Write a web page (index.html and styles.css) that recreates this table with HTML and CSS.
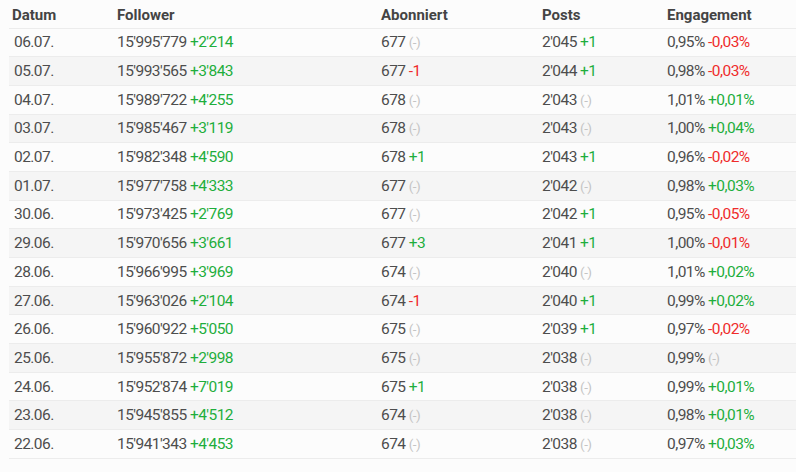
FILE: index.html
```html
<!DOCTYPE html>
<html lang="de">
<head>
<meta charset="utf-8">
<link rel="stylesheet" href="styles.css">
</head>
<body>
<table class="stats">
  <colgroup>
    <col class="c-date"><col class="c-fol"><col class="c-abo"><col class="c-posts"><col class="c-eng">
  </colgroup>
  <thead>
    <tr><th>Datum</th><th>Follower</th><th>Abonniert</th><th>Posts</th><th>Engagement</th></tr>
  </thead>
  <tbody>
    <tr><td class="date">06.07.</td><td>15'995'779 <span class="up">+2'214</span></td><td>677 <span class="nc">(-)</span></td><td>2'045 <span class="up">+1</span></td><td>0,95% <span class="down">-0,03%</span></td></tr>
    <tr><td class="date">05.07.</td><td>15'993'565 <span class="up">+3'843</span></td><td>677 <span class="down">-1</span></td><td>2'044 <span class="up">+1</span></td><td>0,98% <span class="down">-0,03%</span></td></tr>
    <tr><td class="date">04.07.</td><td>15'989'722 <span class="up">+4'255</span></td><td>678 <span class="nc">(-)</span></td><td>2'043 <span class="nc">(-)</span></td><td>1,01% <span class="up">+0,01%</span></td></tr>
    <tr><td class="date">03.07.</td><td>15'985'467 <span class="up">+3'119</span></td><td>678 <span class="nc">(-)</span></td><td>2'043 <span class="nc">(-)</span></td><td>1,00% <span class="up">+0,04%</span></td></tr>
    <tr><td class="date">02.07.</td><td>15'982'348 <span class="up">+4'590</span></td><td>678 <span class="up">+1</span></td><td>2'043 <span class="up">+1</span></td><td>0,96% <span class="down">-0,02%</span></td></tr>
    <tr><td class="date">01.07.</td><td>15'977'758 <span class="up">+4'333</span></td><td>677 <span class="nc">(-)</span></td><td>2'042 <span class="nc">(-)</span></td><td>0,98% <span class="up">+0,03%</span></td></tr>
    <tr><td class="date">30.06.</td><td>15'973'425 <span class="up">+2'769</span></td><td>677 <span class="nc">(-)</span></td><td>2'042 <span class="up">+1</span></td><td>0,95% <span class="down">-0,05%</span></td></tr>
    <tr><td class="date">29.06.</td><td>15'970'656 <span class="up">+3'661</span></td><td>677 <span class="up">+3</span></td><td>2'041 <span class="up">+1</span></td><td>1,00% <span class="down">-0,01%</span></td></tr>
    <tr><td class="date">28.06.</td><td>15'966'995 <span class="up">+3'969</span></td><td>674 <span class="nc">(-)</span></td><td>2'040 <span class="nc">(-)</span></td><td>1,01% <span class="up">+0,02%</span></td></tr>
    <tr><td class="date">27.06.</td><td>15'963'026 <span class="up">+2'104</span></td><td>674 <span class="down">-1</span></td><td>2'040 <span class="up">+1</span></td><td>0,99% <span class="up">+0,02%</span></td></tr>
    <tr><td class="date">26.06.</td><td>15'960'922 <span class="up">+5'050</span></td><td>675 <span class="nc">(-)</span></td><td>2'039 <span class="up">+1</span></td><td>0,97% <span class="down">-0,02%</span></td></tr>
    <tr><td class="date">25.06.</td><td>15'955'872 <span class="up">+2'998</span></td><td>675 <span class="nc">(-)</span></td><td>2'038 <span class="nc">(-)</span></td><td>0,99% <span class="nc">(-)</span></td></tr>
    <tr><td class="date">24.06.</td><td>15'952'874 <span class="up">+7'019</span></td><td>675 <span class="up">+1</span></td><td>2'038 <span class="nc">(-)</span></td><td>0,99% <span class="up">+0,01%</span></td></tr>
    <tr><td class="date">23.06.</td><td>15'945'855 <span class="up">+4'512</span></td><td>674 <span class="nc">(-)</span></td><td>2'038 <span class="nc">(-)</span></td><td>0,98% <span class="up">+0,01%</span></td></tr>
    <tr><td class="date">22.06.</td><td>15'941'343 <span class="up">+4'453</span></td><td>674 <span class="nc">(-)</span></td><td>2'038 <span class="nc">(-)</span></td><td>0,97% <span class="up">+0,03%</span></td></tr>
  </tbody>
</table>
</body>
</html>
```

FILE: styles.css
```css
html, body {
  margin: 0;
  background: #fcfcfc;
}
body {
  padding: 0 0 0 9px;
  font-family: Roboto, "Liberation Sans", sans-serif;
  color: #4d4d4d;
}
.stats {
  width: 787px;
  border-collapse: collapse;
  table-layout: fixed;
}
.c-date { width: 105px; }
.c-fol { width: 264px; }
.c-abo { width: 161px; }
.c-posts { width: 125px; }
.c-eng { width: 132px; }
.stats th {
  height: 28px;
  padding: 2px 0 0 3px;
  text-align: left;
  font-weight: 700;
  font-size: 15px;
  color: #444;
  box-sizing: border-box;
  vertical-align: middle;
}
.stats td {
  height: 28.7px;
  padding: 0 0 0 3px;
  font-size: 15.5px;
  letter-spacing: -0.55px;
  border-top: 1px solid #ececec;
  box-sizing: border-box;
  vertical-align: middle;
  white-space: nowrap;
}
.stats tbody tr:last-child td {
  border-bottom: 1px solid #ececec;
}
.stats tbody tr:nth-child(even) td {
  background: #f5f5f5;
}
.stats td.date {
  padding-left: 5px;
}
.up { color: #1eae3c; }
.down { color: #ef2b2b; }
.nc { color: #c4c4c4; font-size: 13.5px; }
```
